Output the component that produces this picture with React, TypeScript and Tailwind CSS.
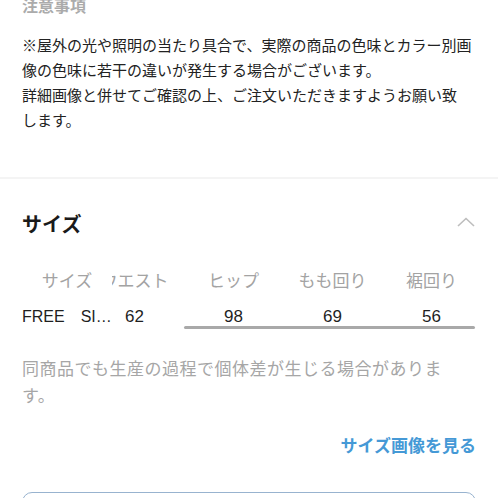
import React from "react";

const sizeRows = [
  { label: "FREE　SIZE", waist: "62", hip: "98", thigh: "69", hem: "56" },
];

const cols = ["ウエスト", "ヒップ", "もも回り", "裾回り"];

export default function App() {
  const row = sizeRows[0];
  const values = [row.waist, row.hip, row.thigh, row.hem];

  return (
    <div className="w-[498px] h-[498px] overflow-hidden bg-white font-['Liberation_Sans','Noto_Sans_CJK_JP',sans-serif]">
      {/* notes */}
      <div className="px-[22px]">
        <h3 className="-mt-[1px] text-[16px] leading-[16px] font-bold text-[#ababab]">注意事項</h3>
        <p className="mt-[18px] text-[15px] leading-[25px] text-[#222]">
          ※屋外の光や照明の当たり具合で、実際の商品の色味とカラー別画像の色味に若干の違いが発生する場合がございます。
          <br />
          詳細画像と併せてご確認の上、ご注文いただきますようお願い致
          <br />
          します。
        </p>
      </div>

      <div className="mt-[44px] h-[2px] bg-[#f4f4f4]" />

      {/* size section */}
      <div className="px-[22px]">
        <div className="mt-[32px] flex items-center justify-between">
          <h2 className="text-[20px] leading-[28px] font-bold text-[#1a1a1a]">サイズ</h2>
          <svg className="mr-[1px] -mt-[7px]" width="18" height="10" viewBox="0 0 18 10" fill="none">
            <path d="M1 9L9 1.5L17 9" stroke="#bdbdbd" strokeWidth="1.6" />
          </svg>
        </div>

        <div className="mt-[26px] flex overflow-hidden">
          <div className="relative z-10 w-[90px] shrink-0 bg-white">
            <div className="flex h-[34px] items-center justify-center text-[17px] text-[#a3a3a3]">サイズ</div>
            <div className="flex h-[27px] items-end">
              <span className="block w-[90px] truncate whitespace-nowrap text-[16px] leading-[18px] text-[#1f1f1f]">{row.label}</span>
            </div>
          </div>

          <div className="-ml-[27px] shrink-0">
            <div className="flex h-[34px] items-center">
              {cols.map((c) => (
                <div key={c} className="w-[99px] text-center text-[17px] text-[#a3a3a3] whitespace-nowrap">
                  {c}
                </div>
              ))}
            </div>
            <div className="flex h-[27px] items-end">
              {values.map((v, i) => (
                <div key={i} className="w-[99px] text-center text-[17px] leading-[18px] text-[#1f1f1f]">
                  {v}
                </div>
              ))}
            </div>
            <div className="ml-[99px] h-[3px] w-[291px] rounded-full bg-[#a9a9a9]" />
          </div>
        </div>

        <p className="mt-[27px] w-[450px] text-[17px] leading-[27px] tracking-[0.5px] text-[#a6a6a6]">
          同商品でも生産の過程で個体差が生じる場合があります。
        </p>

        <div className="mt-[25px] flex justify-end">
          <a href="#" className="text-[17px] leading-[24px] font-bold text-[#4599d6]">サイズ画像を見る</a>
        </div>

        <button className="mt-[33px] h-[50px] w-full rounded-[10px] border border-[#98b3cf] bg-white" />
      </div>
    </div>
  );
}
